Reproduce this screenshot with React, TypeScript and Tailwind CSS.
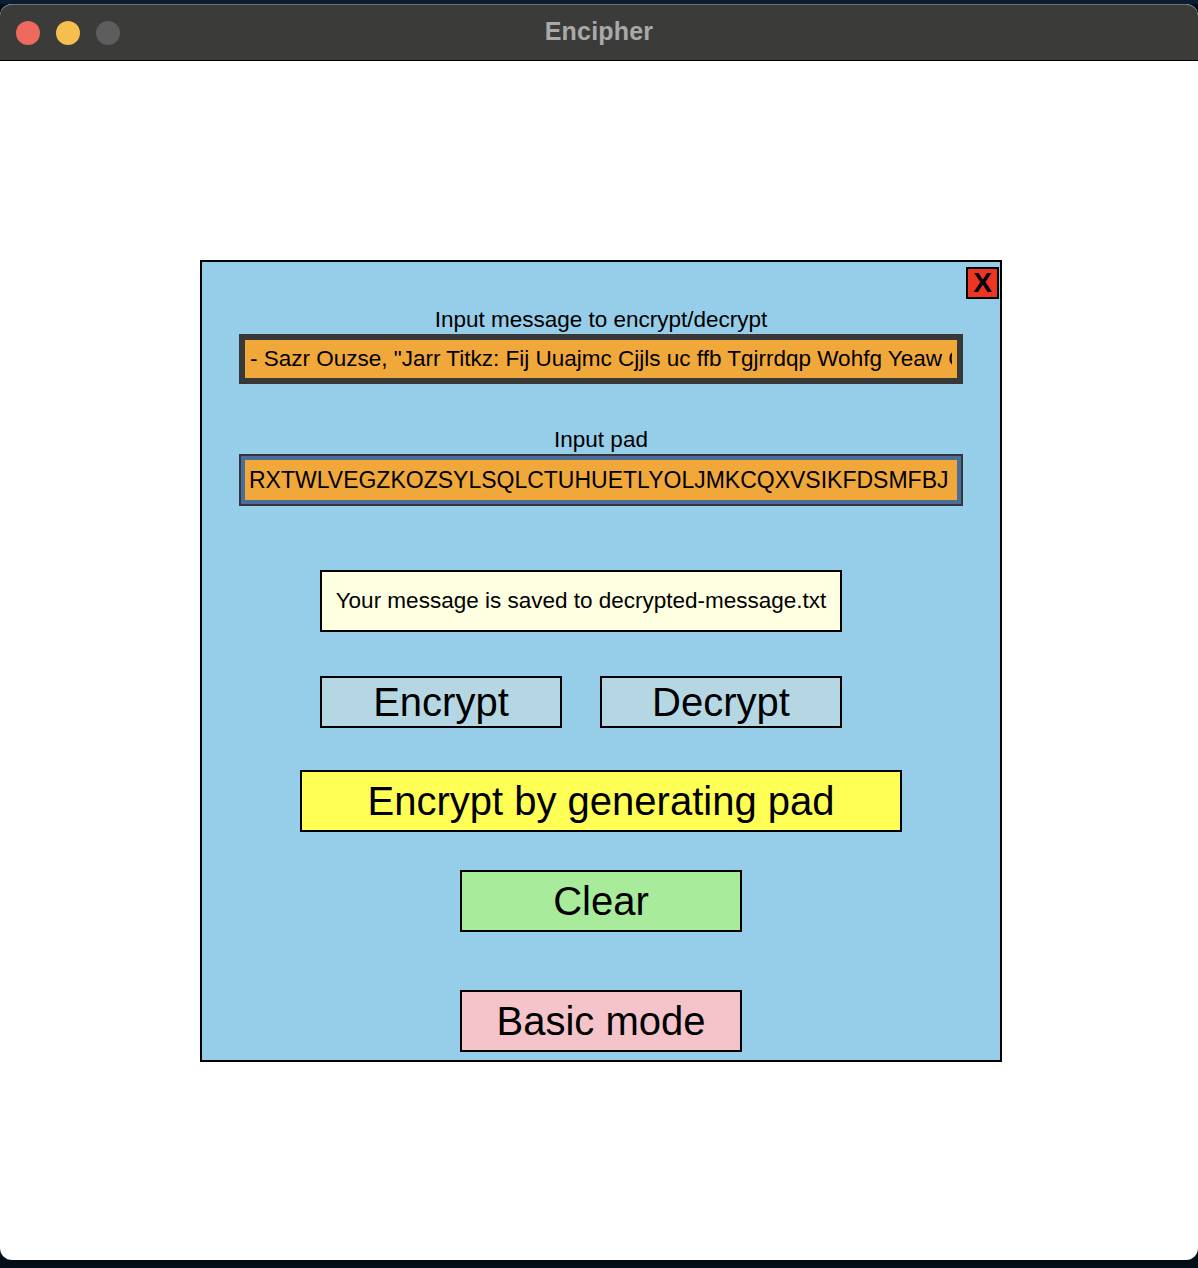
import React from 'react'

const sans = { fontFamily: '"Liberation Sans", Arial, sans-serif' }

const MESSAGE =
  '- Sazr Ouzse, "Jarr Titkz: Fij Uuajmc Cjjls uc ffb Tgjrrdqp Wohfg Yeaw Gvxqtm Hrzo Pkwle"'
const PAD = 'RXTWLVEGZKOZSYLSQLCTUHUETLYOLJMKCQXVSIKFDSMFBJ'

const App = () => {
  return (
    <div className="h-[1268px] w-[1198px] bg-[#030e17] flex flex-col overflow-hidden" style={sans}>
      {/* desktop strip above the window */}
      <div className="h-[4px] bg-[#0c1d31] shrink-0" />

      {/* window */}
      <div className="h-[1256px] bg-white rounded-[12px] overflow-hidden flex flex-col">
        {/* title bar */}
        <div className="h-[57px] shrink-0 bg-[#3b3b39] border-t border-[#707070] border-b border-b-black rounded-t-[12px] flex items-center relative">
          <div className="flex items-center gap-4 pl-4">
            <span className="w-6 h-6 rounded-full bg-[#ee6a5f]" />
            <span className="w-6 h-6 rounded-full bg-[#f5be4f]" />
            <span className="w-6 h-6 rounded-full bg-[#5d5d5d]" />
          </div>
          <div className="absolute inset-0 flex items-center justify-center pointer-events-none">
            <span className="text-[25px] font-bold text-[#a9a9a9] tracking-[0.2px] -mt-[2px]">Encipher</span>
          </div>
        </div>

        {/* content */}
        <div className="flex-1 pt-[199px] pl-[200px]">
          <div className="relative w-[802px] h-[802px] border-2 border-black bg-[#96cde9] flex flex-col items-center text-black">
            <button className="absolute top-[5px] right-[1px] w-[33px] h-[32px] border-2 border-black bg-[#ee3424] flex items-center justify-center text-[28px] font-bold leading-none">
              X
            </button>

            <div className="mt-[45px] text-[22.5px] leading-[26px]">Input message to encrypt/decrypt</div>
            <div className="mt-px w-[724px] h-[50px] border-[6px] border-[#383838] bg-[#f1a83a]">
              <input
                readOnly
                value={MESSAGE}
                className="w-full h-full bg-transparent px-[5px] text-[22.5px] outline-none"
                style={sans}
              />
            </div>

            <div className="mt-[43px] text-[22.5px] leading-[26px]">Input pad</div>
            <div className="mt-px w-[724px] h-[52px] border-2 border-[#363636] bg-[#4b6d9b]">
              <div className="w-full h-full border-[4px] border-[#4b6d9b] rounded-[4px] bg-[#f1a83a]">
                <input
                  readOnly
                  value={PAD}
                  className="w-full h-full bg-transparent px-[4px] text-[23px] outline-none"
                  style={sans}
                />
              </div>
            </div>

            <div className="self-start ml-[118px] mt-[64px] w-[522px] h-[62px] border-2 border-black bg-[#ffffe2] flex items-center justify-center text-[22.5px]">
              Your message is saved to decrypted-message.txt
            </div>

            <div className="self-start ml-[118px] mt-[44px] flex gap-[38px]">
              <button className="w-[242px] h-[52px] border-2 border-black bg-[#b4d7e3] text-[40px] leading-none flex items-center justify-center">
                Encrypt
              </button>
              <button className="w-[242px] h-[52px] border-2 border-black bg-[#b4d7e3] text-[40px] leading-none flex items-center justify-center">
                Decrypt
              </button>
            </div>

            <button className="mt-[42px] w-[602px] h-[62px] border-2 border-black bg-[#ffff55] text-[40px] leading-none flex items-center justify-center">
              Encrypt by generating pad
            </button>

            <button className="mt-[38px] w-[282px] h-[62px] border-2 border-black bg-[#a8eb9a] text-[40px] leading-none flex items-center justify-center">
              Clear
            </button>

            <button className="mt-[58px] w-[282px] h-[62px] border-2 border-black bg-[#f5c4cb] text-[40px] leading-none flex items-center justify-center">
              Basic mode
            </button>
          </div>
        </div>
      </div>
    </div>
  )
}

export default App
